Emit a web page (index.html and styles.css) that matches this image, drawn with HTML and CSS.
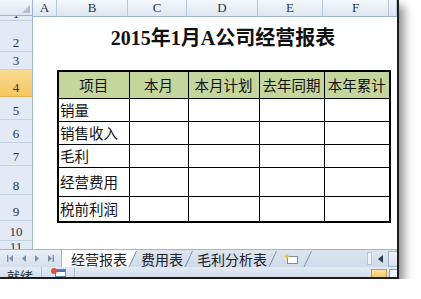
FILE: index.html
```html
<!DOCTYPE html>
<html lang="zh-CN">
<head>
    <meta charset="UTF-8">
    <title>2015年1月A公司经营报表</title>
    <link rel="stylesheet" href="styles.css">
</head>
<body>
    <div class="window">
        <div class="sheet">
            <div class="corner"><span class="corner-tri"></span></div>

            <div class="colheads">
                <div class="colhead">A</div>
                <div class="colhead">B</div>
                <div class="colhead">C</div>
                <div class="colhead">D</div>
                <div class="colhead">E</div>
                <div class="colhead">F</div>
                <div class="colhead"></div>
            </div>

            <div class="rowheads">
                <div class="rowhead cut-top">1</div>
                <div class="rowhead">2</div>
                <div class="rowhead">3</div>
                <div class="rowhead selected">4</div>
                <div class="rowhead">5</div>
                <div class="rowhead">6</div>
                <div class="rowhead">7</div>
                <div class="rowhead">8</div>
                <div class="rowhead">9</div>
                <div class="rowhead">10</div>
                <div class="rowhead cut-bottom">11</div>
            </div>

            <div class="cells">
                <div class="title">2015年1月A公司经营报表</div>

                <table class="report">
                    <colgroup>
                        <col class="w-b"><col class="w-c"><col class="w-d"><col class="w-e"><col class="w-f">
                    </colgroup>
                    <thead>
                        <tr class="h-head">
                            <th>项目</th>
                            <th>本月</th>
                            <th>本月计划</th>
                            <th>去年同期</th>
                            <th>本年累计</th>
                        </tr>
                    </thead>
                    <tbody>
                        <tr class="h-row"><td>销量</td><td></td><td></td><td></td><td></td></tr>
                        <tr class="h-row"><td>销售收入</td><td></td><td></td><td></td><td></td></tr>
                        <tr class="h-row"><td>毛利</td><td></td><td></td><td></td><td></td></tr>
                        <tr class="h-tall"><td>经营费用</td><td></td><td></td><td></td><td></td></tr>
                        <tr class="h-mid"><td>税前利润</td><td></td><td></td><td></td><td></td></tr>
                    </tbody>
                </table>
            </div>
        </div>

        <div class="tabbar">
            <div class="tabnav">
                <svg width="6" height="7" viewBox="0 0 6 7"><rect x="0" y="0" width="1.4" height="7" fill="#7d8ea8"/><path d="M6 0V7L2 3.5Z" fill="#7d8ea8"/></svg>
                <svg width="4" height="7" viewBox="0 0 4 7"><path d="M4 0V7L0 3.5Z" fill="#7d8ea8"/></svg>
                <svg width="4" height="7" viewBox="0 0 4 7"><path d="M0 0V7L4 3.5Z" fill="#7d8ea8"/></svg>
                <svg width="6" height="7" viewBox="0 0 6 7"><path d="M0 0V7L4 3.5Z" fill="#7d8ea8"/><rect x="4.6" y="0" width="1.4" height="7" fill="#7d8ea8"/></svg>
            </div>

            <div class="tab active">经营报表</div>
            <svg class="slant" width="9" height="17" viewBox="0 0 9 17"><path d="M0 0H8.5L1 17H0Z" fill="#fff"/><path d="M1 17L8.5 1" stroke="#7f8fa8" fill="none"/></svg>
            <div class="tab">费用表</div>
            <svg class="slant" width="9" height="17" viewBox="0 0 9 17"><path d="M1 17L8.5 1" stroke="#7f8fa8" fill="none"/></svg>
            <div class="tab">毛利分析表</div>
            <svg class="slant" width="9" height="17" viewBox="0 0 9 17"><path d="M1 17L8.5 1" stroke="#7f8fa8" fill="none"/></svg>
            <div class="tab insert">
                <svg width="16" height="11" viewBox="0 0 16 11">
                    <rect x="4.5" y="3.5" width="10" height="7" fill="#fff" stroke="#7d8ea8"/>
                    <path d="M4 0L5 2.5L7.5 3L5 4L4 6.5L3 4L0.5 3L3 2.5Z" fill="#f2c12e"/>
                </svg>
            </div>
            <svg class="slant" width="9" height="17" viewBox="0 0 9 17"><path d="M1 17L8.5 1" stroke="#7f8fa8" fill="none"/></svg>

            <div class="hscroll">
                <span class="splitter"></span>
                <span class="scroll-btn">
                    <svg width="5" height="8" viewBox="0 0 5 8"><path d="M5 0V8L0 4Z" fill="#2f3b4f"/></svg>
                </span>
                <span class="scroll-track"></span>
            </div>
        </div>

        <div class="status">
            <span class="status-text">就绪</span>
            <span class="status-sep"></span>
            <svg class="macro" width="16" height="9" viewBox="0 0 16 9">
                <rect x="5.5" y="1.5" width="10" height="7" fill="#fff" stroke="#6b82b0"/>
                <rect x="6" y="2" width="9" height="2" fill="#4d6fb5"/>
                <circle cx="4" cy="3" r="3" fill="#d9533e"/>
            </svg>
            <span class="status-sep"></span>
            <div class="views">
                <span class="view-btn on"></span>
                <span class="view-btn"></span>
            </div>
        </div>
    </div>
</body>
</html>
```

FILE: styles.css
```css
body {
    margin: 0;
    padding: 0;
    background-color: #fff;
    font-family: "Liberation Serif", "Noto Sans CJK SC", serif;
}

.window {
    width: 399px;
    height: 279px;
    box-sizing: border-box;
    border-right: 2px solid #1c1c1c;
    border-bottom: 2px solid #1c1c1c;
    box-shadow: 5px 6px 9px rgba(0, 0, 0, 0.45);
    display: flex;
    flex-direction: column;
    overflow: hidden;
    background-color: #fff;
}

/* sheet grid */
.sheet {
    display: grid;
    grid-template-columns: 33px 364px;
    grid-template-rows: 16px 233px;
}

.corner {
    position: relative;
    background: linear-gradient(#f4f7fb, #dfe7f2);
    border-right: 1px solid #9eb6ce;
    border-bottom: 1px solid #9eb6ce;
    box-sizing: border-box;
}

.corner-tri {
    position: absolute;
    right: 2px;
    bottom: 2px;
    width: 0;
    height: 0;
    border-left: 8px solid transparent;
    border-bottom: 8px solid #b4bfcc;
}

.colheads,
.cells {
    display: grid;
    grid-template-columns: 24px 71px 59px 71px 65px 66px 8px;
}

.colhead {
    background: linear-gradient(#f5f8fc, #dee6f1);
    border-right: 1px solid #b8c9dc;
    border-bottom: 1px solid #9eb6ce;
    box-sizing: border-box;
    font-size: 13px;
    line-height: 16px;
    color: #2a3444;
    text-align: center;
}

.rowheads,
.cells {
    grid-template-rows: 5px 31px 18px 27px 23px 23px 23px 29px 26px 20px 8px;
}

.rowheads {
    display: grid;
}

.rowhead {
    display: flex;
    align-items: flex-end;
    justify-content: center;
    overflow: hidden;
    background-color: #e3eaf5;
    border-right: 1px solid #9eb6ce;
    border-bottom: 1px solid #c2d1e3;
    box-sizing: border-box;
    font-size: 13px;
    line-height: 14px;
    color: #2a3444;
    padding-bottom: 1px;
}

.rowhead.selected {
    background: linear-gradient(#fadb95, #f4c65e);
    border-bottom-color: #e0b04c;
}

.rowhead.cut-top {
    line-height: 12px;
    padding-bottom: 0;
}

.rowhead.cut-bottom {
    align-items: flex-start;
    padding-top: 0;
    padding-bottom: 0;
    border-bottom: none;
    line-height: 12px;
}

/* report */
.title {
    grid-column: 2 / 7;
    grid-row: 2;
    align-self: end;
    text-align: center;
    font-size: 20px;
    font-weight: bold;
    line-height: 20px;
    color: #111;
    padding-bottom: 4px;
}

.report {
    grid-column: 2 / 7;
    grid-row: 4 / 10;
    width: 332px;
    border-collapse: collapse;
    table-layout: fixed;
    border: 2px solid #000;
    font-family: "Noto Sans CJK SC", sans-serif;
    font-size: 14.5px;
    color: #111;
}

.w-b { width: 71px; }
.w-c { width: 59px; }
.w-d { width: 71px; }
.w-e { width: 65px; }
.w-f { width: 66px; }

.report th,
.report td {
    border: 1px solid #000;
    padding: 0 0 0 1px;
    line-height: 15px;
    white-space: nowrap;
    overflow: hidden;
}

.report th {
    background-color: #c4d69c;
    font-weight: normal;
    text-align: center;
    padding: 0;
}

.report td {
    text-align: left;
}

.h-head { height: 27px; }
.h-row { height: 23px; }
.h-tall { height: 29px; }
.h-mid { height: 26px; }

/* sheet tabs */
.tabbar {
    height: 18px;
    box-sizing: border-box;
    display: flex;
    align-items: stretch;
    background: linear-gradient(#dce5f1, #cfdbea);
    border-top: 1px solid #9eb6ce;
    font-family: "Noto Sans CJK SC", sans-serif;
    font-size: 14px;
    color: #1e2024;
}

.tabnav {
    width: 62px;
    flex-shrink: 0;
    display: flex;
    align-items: center;
    justify-content: space-around;
    padding: 0 3px;
    box-sizing: border-box;
    border-right: 1px solid #a3b6cf;
    background: linear-gradient(#e9eff7, #d4deec);
}

.tab {
    display: flex;
    align-items: center;
    padding: 0 1px 0 4px;
    line-height: 14px;
}

.tab.active {
    background-color: #fff;
    padding-left: 9px;
}

.tab.insert {
    padding: 0 4px 0 6px;
}

.slant {
    flex-shrink: 0;
}

.hscroll {
    margin-left: auto;
    display: flex;
    align-items: center;
    gap: 3px;
}

.splitter {
    width: 3px;
    height: 11px;
    background-color: #f0f3f8;
    border: 1px solid #b7c4d6;
}

.scroll-btn {
    width: 10px;
    height: 14px;
    display: flex;
    align-items: center;
    justify-content: center;
}

.scroll-track {
    width: 8px;
    height: 14px;
    background: linear-gradient(#eef2f8, #dbe3ee);
    border: 1px solid #9eb0c8;
    border-right: none;
}

/* status bar */
.status {
    height: 10px;
    overflow: hidden;
    display: flex;
    align-items: flex-start;
    background: linear-gradient(#e3eaf4, #d3deec);
    font-family: "Noto Sans CJK SC", sans-serif;
    font-size: 13px;
    color: #2c3340;
}

.status-text {
    margin: 2px 0 0 7px;
    line-height: 14px;
}

.status-sep {
    width: 1px;
    height: 10px;
    background-color: #aebfd4;
    margin: 0 8px 0 8px;
}

.macro {
    margin-top: 1px;
}

.views {
    margin-left: auto;
    display: flex;
    gap: 2px;
    padding-top: 2px;
}

.view-btn {
    width: 16px;
    height: 10px;
    box-sizing: border-box;
    border: 1px solid #8c9db5;
    background-color: #eef2f8;
}

.view-btn.on {
    background: linear-gradient(#fbe19e, #f4c561);
    border-color: #c39b45;
}

.view-btn:last-child {
    width: 8px;
    border-right: none;
}
```
